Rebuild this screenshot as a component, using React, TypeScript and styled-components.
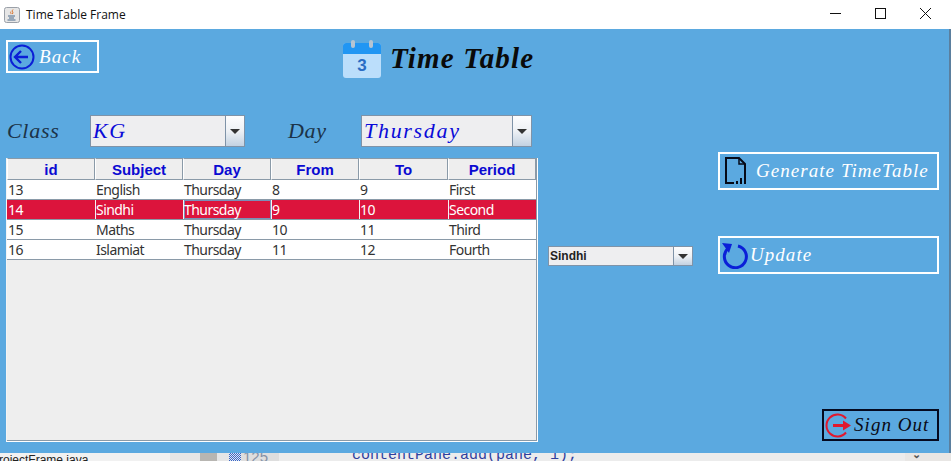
import React from "react";
import styled, { createGlobalStyle } from "styled-components";

const Global = createGlobalStyle`
  html, body { margin: 0; padding: 0; background: #fff; overflow: hidden; }
  * { box-sizing: border-box; }
`;

const hand = `"Liberation Serif", cursive`;

const Frame = styled.div`
  width: 951px;
  height: 461px;
  display: flex;
  flex-direction: column;
  overflow: hidden;
  font-family: "Liberation Sans", sans-serif;
`;

const TitleBar = styled.div`
  height: 29px;
  flex: none;
  background: #fff;
  display: flex;
  align-items: center;
  padding-left: 4px;
`;

const TitleText = styled.span`
  margin-left: 6px;
  font: 12px "Open Sans", "Noto Sans", sans-serif;
  color: #111;
`;

const WinControls = styled.div`
  margin-left: auto;
  display: flex;
  align-items: center;
  gap: 34px;
  padding: 0 20px 3px 0;
`;

const Pane = styled.div`
  height: 424px;
  flex: none;
  background: #5ba9e0;
  border-right: 2px solid #5b7f9e;
  padding: 11px 10px 0 6px;
  display: flex;
  flex-direction: column;
`;

const Header = styled.div`
  height: 40px;
  display: flex;
  align-items: flex-start;
`;

const OutlineButton = styled.div<{ $w: number; $h: number; $dark?: boolean; $gap?: number; $pl?: number }>`
  width: ${(p) => p.$w}px;
  height: ${(p) => p.$h}px;
  flex: none;
  border: 2px solid ${(p) => (p.$dark ? "#050a20" : "#fff")};
  display: flex;
  align-items: center;
  gap: ${(p) => p.$gap ?? 4}px;
  padding-left: ${(p) => p.$pl ?? 1}px;
  color: ${(p) => (p.$dark ? "#0a0a14" : "#fff")};
  font-family: ${hand};
  font-style: italic;
  font-size: 19px;
  letter-spacing: 1.05px;
  white-space: nowrap;
`;

const TitleGroup = styled.div`
  margin-left: 243px;
  display: flex;
  align-items: flex-start;
  gap: 8px;
`;

const Heading = styled.span`
  font-family: ${hand};
  font-style: italic;
  font-size: 29px;
  line-height: 36px;
  letter-spacing: 1.2px;
  font-weight: 700;
  color: #0a0a0a;
`;

const FilterRow = styled.div`
  margin-top: 35px;
  height: 32px;
  display: flex;
  align-items: center;
`;

const FilterLabel = styled.span<{ $w: number; $ml?: number }>`
  width: ${(p) => p.$w}px;
  margin-left: ${(p) => p.$ml ?? 0}px;
  flex: none;
  font-family: ${hand};
  font-style: italic;
  font-size: 22px;
  letter-spacing: 0.7px;
  color: #1c3348;
`;

const Combo = styled.div<{ $w: number; $h: number; $small?: boolean }>`
  width: ${(p) => p.$w}px;
  height: ${(p) => p.$h}px;
  flex: none;
  display: flex;
  border: 1px solid #7f93a8;
  background: #eeeef0;
  color: ${(p) => (p.$small ? "#222" : "#0a0ad8")};
  font-family: ${(p) => (p.$small ? `"Liberation Sans", sans-serif` : hand)};
  font-style: ${(p) => (p.$small ? "normal" : "italic")};
  font-weight: ${(p) => (p.$small ? 700 : 400)};
  font-size: ${(p) => (p.$small ? 12 : 22)}px;
  letter-spacing: ${(p) => (p.$small ? 0 : 1.7)}px;
`;

const ComboValue = styled.div<{ $small?: boolean }>`
  flex: 1;
  display: flex;
  align-items: center;
  padding-left: ${(p) => (p.$small ? 1 : 2)}px;
`;

const ComboArrow = styled.div<{ $w: number }>`
  width: ${(p) => p.$w}px;
  flex: none;
  border-left: 1px solid #7f93a8;
  background: linear-gradient(#fdfdfe 0%, #eef1f5 50%, #c3d2e2 100%);
  display: flex;
  align-items: center;
  justify-content: center;
  &::after {
    content: "";
    border-left: 5px solid transparent;
    border-right: 5px solid transparent;
    border-top: 5px solid #333;
  }
`;

const Body = styled.div`
  margin-top: 5px;
  flex: 1;
  display: flex;
  align-items: flex-start;
`;

const TableBox = styled.div`
  margin-top: 6px;
  width: 532px;
  height: 284px;
  flex: none;
  background: #eeeeee;
  border: 1px solid #fff;
  border-top: 0;
  border-left-color: #f4f4f4;
`;

const TableInner = styled.div`
  height: 100%;
  border: 1px solid #8a9aa8;
  border-top: 0;
  border-left: 0;
`;

const TableRow = styled.div<{ $selected?: boolean; $header?: boolean }>`
  display: grid;
  grid-template-columns: 88px 88px 88px 88px 89px 88px;
  width: 529px;
  height: ${(p) => (p.$header ? 22 : 20)}px;
  background: ${(p) => (p.$header ? "#eeeeee" : p.$selected ? "#dc143c" : "#fff")};
  ${(p) => (p.$header ? "" : "border-bottom: 1px solid #8a9aa8;")}
`;

const HeadCell = styled.div`
  border: 1px solid #8a9aa8;
  border-left-color: #fff;
  display: flex;
  align-items: center;
  justify-content: center;
  padding-top: 1px;
  color: #0a0ad2;
  font-weight: 700;
  font-size: 15px;
`;

const Cell = styled.div<{ $selected?: boolean; $divider?: boolean; $focus?: boolean }>`
  display: flex;
  align-items: center;
  padding-left: ${(p) => (p.$divider ? 0 : 1)}px;
  font-family: "Noto Sans", sans-serif;
  font-size: 14px;
  letter-spacing: -0.55px;
  color: ${(p) => (p.$selected ? "#fff" : "#333")};
  ${(p) => (p.$divider ? "border-left: 1px solid #f4f4f4;" : "")}
  ${(p) => (p.$focus ? "box-shadow: inset 0 0 0 1px #7a8fb8;" : "")}
`;

const MiddleCol = styled.div`
  margin: 94px 0 0 10px;
`;

const RightCol = styled.div`
  margin-left: 25px;
  width: 221px;
  height: 289px;
  display: flex;
  flex-direction: column;
  align-items: flex-end;
`;

const Spacer = styled.div<{ $h: number }>`
  height: ${(p) => p.$h}px;
  flex: none;
`;

const BottomStrip = styled.div`
  height: 8px;
  flex: none;
  display: flex;
  background: #e6e6e6;
  overflow: hidden;
`;

const FileTab = styled.div`
  width: 170px;
  background: #f1f1f1;
  font: 12px/12px "Liberation Sans", sans-serif;
  color: #222;
  white-space: nowrap;
  flex: none;
  overflow: hidden;
  padding-top: 1px;
  text-indent: -1px;
`;

const Gutter = styled.div`
  width: 17px;
  margin-left: 30px;
  flex: none;
  background: #b8b6b2;
`;

const Hatch = styled.div`
  width: 12px;
  margin-left: 12px;
  flex: none;
  background: repeating-conic-gradient(#3b66c4 0 25%, #dfe6f2 0 50%) 0 0 / 2px 2px;
`;

const LineNo = styled.div`
  width: 38px;
  flex: none;
  background: #dedede;
  font: 15px/8px "Liberation Sans", sans-serif;
  color: #8592a6;
  padding-left: 2px;
`;

const Code = styled.div`
  width: 626px;
  padding-left: 73px;
  flex: none;
  background: #ececec;
  font: 15px/6px "Liberation Mono", monospace;
  color: #2f3f9e;
  white-space: nowrap;
`;

const Chevron = styled.div`
  width: 54px;
  padding-right: 28px;
  flex: none;
  background: #e8e6e4;
  text-align: center;
  border-right: 3px solid #cfd2d8;
  font: 700 11px/3px "Liberation Sans", sans-serif;
  color: #555;
`;

const JavaIcon = () => (
  <svg width="16" height="16" viewBox="0 0 16 16">
    <rect x="0.5" y="0.5" width="15" height="15" rx="2" fill="#e6e6e6" stroke="#9aa0a8" />
    <path d="M9 2.5c-2 1.6 1 2.6-.6 4.6M7 4.5c-1.2 1 .6 1.6-.2 2.6" fill="none" stroke="#d9722a" strokeWidth="1" />
    <path d="M4 9h7M5 11h5M3.5 13h8" stroke="#4a6a8c" strokeWidth="1" />
  </svg>
);

const BackIcon = () => (
  <svg width="26" height="26" viewBox="0 0 26 26">
    <circle cx="13" cy="13" r="11.5" fill="none" stroke="#0b1fd6" strokeWidth="2" />
    <path d="M6 13h13M12 7l-6 6 6 6" fill="none" stroke="#0b1fd6" strokeWidth="2.4" />
  </svg>
);

const CalendarIcon = () => (
  <svg width="40" height="38" viewBox="0 0 40 38">
    <rect x="1" y="3" width="38" height="35" rx="3" fill="#bbdefb" />
    <path d="M1 14V6a3 3 0 0 1 3-3h32a3 3 0 0 1 3 3v8z" fill="#2196f3" />
    <rect x="9" y="0" width="4" height="8" rx="2" fill="#b5c4d2" />
    <rect x="27" y="0" width="4" height="8" rx="2" fill="#b5c4d2" />
    <text x="20" y="31" textAnchor="middle" fontFamily="Liberation Sans" fontWeight="700" fontSize="17" fill="#2a6cc4">3</text>
  </svg>
);

const FileIcon = () => (
  <svg width="22" height="28" viewBox="0 0 22 28">
    <path d="M1 27V1h13l6 6v12" fill="none" stroke="#050a18" strokeWidth="2" />
    <path d="M1 26h8" stroke="#050a18" strokeWidth="2" />
    <path d="M14 1v6h6" fill="none" stroke="#050a18" strokeWidth="1.5" />
    <path d="M11 24h2v3h-2zM15 21h2v6h-2zM19 18h2v9h-2z" fill="#050a18" />
  </svg>
);

const RefreshIcon = () => (
  <svg width="28" height="28" viewBox="0 0 28 28">
    <path d="M7 7.5a11 11 0 1 0 10-2.5" fill="none" stroke="#0a1fd8" strokeWidth="3" />
    <path d="M1 2l10 1-3 9z" fill="#0a1fd8" />
  </svg>
);

const SignOutIcon = () => (
  <svg width="27" height="27" viewBox="0 0 27 27">
    <path d="M21 6.5a11 11 0 1 0 0 14" fill="none" stroke="#e0182d" strokeWidth="2" />
    <path d="M8 13.5h11" stroke="#e0182d" strokeWidth="3" />
    <path d="M18 8.5l8 5-8 5z" fill="#e0182d" />
  </svg>
);

const columns = ["id", "Subject", "Day", "From", "To", "Period"];
const rows = [
  ["13", "English", "Thursday", "8", "9", "First"],
  ["14", "Sindhi", "Thursday", "9", "10", "Second"],
  ["15", "Maths", "Thursday", "10", "11", "Third"],
  ["16", "Islamiat", "Thursday", "11", "12", "Fourth"],
];

export default function App() {
  return (
    <Frame>
      <Global />
      <TitleBar>
        <JavaIcon />
        <TitleText>Time Table Frame</TitleText>
        <WinControls>
          <svg width="11" height="11" viewBox="0 0 11 11"><path d="M0 5.5h11" stroke="#111" /></svg>
          <svg width="11" height="11" viewBox="0 0 11 11"><rect x="0.5" y="0.5" width="10" height="10" fill="none" stroke="#111" /></svg>
          <svg width="11" height="11" viewBox="0 0 11 11"><path d="M0 0l11 11M11 0L0 11" stroke="#111" /></svg>
        </WinControls>
      </TitleBar>
      <Pane>
        <Header>
          <OutlineButton $w={93} $h={33}>
            <BackIcon />
            Back
          </OutlineButton>
          <TitleGroup>
            <CalendarIcon />
            <Heading>Time Table</Heading>
          </TitleGroup>
        </Header>
        <FilterRow>
          <FilterLabel $w={83} $ml={1}>Class</FilterLabel>
          <Combo $w={155} $h={32}>
            <ComboValue>KG</ComboValue>
            <ComboArrow $w={19} />
          </Combo>
          <FilterLabel $w={73} $ml={43}>Day</FilterLabel>
          <Combo $w={171} $h={32}>
            <ComboValue>Thursday</ComboValue>
            <ComboArrow $w={19} />
          </Combo>
        </FilterRow>
        <Body>
          <TableBox>
            <TableInner>
              <TableRow $header>
                {columns.map((c) => (
                  <HeadCell key={c}>{c}</HeadCell>
                ))}
              </TableRow>
              {rows.map((r, i) => (
                <TableRow key={r[0]} $selected={i === 1}>
                  {r.map((v, j) => (
                    <Cell key={j} $selected={i === 1} $divider={i === 1 && j > 0} $focus={i === 1 && j === 2}>
                      {v}
                    </Cell>
                  ))}
                </TableRow>
              ))}
            </TableInner>
          </TableBox>
          <MiddleCol>
            <Combo $w={145} $h={20} $small>
              <ComboValue $small>Sindhi</ComboValue>
              <ComboArrow $w={19} />
            </Combo>
          </MiddleCol>
          <RightCol>
            <OutlineButton $w={221} $h={38} $gap={9} $pl={5}>
              <FileIcon />
              Generate TimeTable
            </OutlineButton>
            <Spacer $h={46} />
            <OutlineButton $w={221} $h={38} $gap={1} $pl={1}>
              <RefreshIcon />
              Update
            </OutlineButton>
            <Spacer $h={135} />
            <OutlineButton $w={117} $h={32} $dark $gap={2} $pl={1}>
              <SignOutIcon />
              Sign Out
            </OutlineButton>
          </RightCol>
        </Body>
      </Pane>
      <BottomStrip>
        <FileTab>rojectFrame.java</FileTab>
        <Gutter />
        <Hatch />
        <LineNo>125</LineNo>
        <Code>contentPane.add(pane, 1);</Code>
        <Chevron>⌄</Chevron>
      </BottomStrip>
    </Frame>
  );
}
